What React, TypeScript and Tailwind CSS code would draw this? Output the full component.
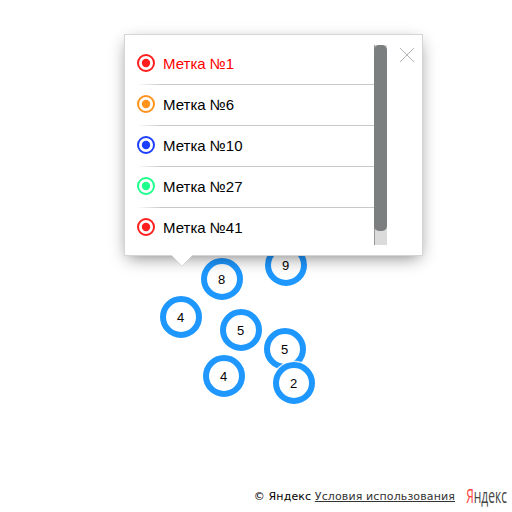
const items = [
  { label: 'Метка №1', color: '#ff1f1f', active: true },
  { label: 'Метка №6', color: '#ff931e', active: false },
  { label: 'Метка №10', color: '#1e3fff', active: false },
  { label: 'Метка №27', color: '#1eff8e', active: false },
  { label: 'Метка №41', color: '#ff1f1f', active: false },
];

const clusters = [
  { x: 265, y: 244, count: 9 },
  { x: 201, y: 258, count: 8 },
  { x: 160, y: 296, count: 4 },
  { x: 220, y: 309, count: 5 },
  { x: 264, y: 328, count: 5 },
  { x: 203, y: 355, count: 4 },
  { x: 273, y: 362, count: 2 },
];

function Cluster({ x, y, count }: { x: number; y: number; count: number }) {
  return (
    <div className="absolute size-[42px]" style={{ left: x, top: y }}>
      <svg className="absolute -left-0.5 -top-0.5" width="46" height="46" viewBox="-2 -2 46 46">
        <circle cx="21" cy="21" r="22.5" fill="#fff" fillOpacity="0.8" />
        <circle cx="21" cy="21" r="18" fill="#fff" stroke="#1e98ff" strokeWidth="6" />
      </svg>
      <span className="relative flex h-[43px] items-center justify-center pr-px text-[13px] text-black">{count}</span>
    </div>
  );
}

function PlacemarkIcon({ color }: { color: string }) {
  return (
    <svg width="18" height="18" viewBox="0 0 18 18" fill="none">
      <circle cx="9" cy="9" r="8" stroke={color} strokeWidth="2" />
      <circle cx="9" cy="9" r="4.2" fill={color} />
    </svg>
  );
}

function Balloon() {
  return (
    <div className="absolute left-[124px] top-[34px] h-[222px] w-[299px] border border-[#d5d5d5] bg-white pl-3 pt-2.5 shadow-[0_5px_15px_-5px_rgba(0,0,0,0.45),0_5px_18px_rgba(0,0,0,0.1)]">
      <div className="flex">
        <ul className="h-[200px] w-[237px] overflow-hidden">
          {items.map((item) => (
            <li key={item.label} className="h-[41px]">
              <div className="flex h-10 items-center gap-2 pb-1">
                <PlacemarkIcon color={item.color} />
                <span className={item.active ? 'pt-0.5 text-[15px] leading-4 text-[#f00]' : 'pt-0.5 text-[15px] leading-4 text-black'}>
                  {item.label}
                </span>
              </div>
              <div className="-mt-px h-px bg-[linear-gradient(to_right,#fff_0,#c8c8c8_24px)]" />
            </li>
          ))}
        </ul>
        <div className="h-[200px] w-[13px] border-l border-[#999] bg-[#dbdbdb]">
          <div className="-ml-px h-[186px] w-[13px] rounded-[5px] bg-[#7b7f7f]" />
        </div>
        <svg className="ml-[13px] mt-[3px]" width="14" height="14" viewBox="0 0 14 14" stroke="#b3b3b3" strokeWidth="1">
          <path d="M0 0L14 14M14 0L0 14" />
        </svg>
      </div>
      <svg className="absolute left-[46px] top-[220px]" width="22" height="12" viewBox="0 0 22 12">
        <path d="M0 0H22L11 11Z" fill="#fff" />
        <path d="M0 0L11 11L22 0" fill="none" stroke="#000" strokeOpacity="0.15" strokeWidth="0.7" />
      </svg>
    </div>
  );
}

export default function App() {
  return (
    <div className="relative flex h-[512px] w-[512px] flex-col justify-end overflow-hidden bg-white font-['Liberation_Sans',Arial,sans-serif]">
      {clusters.map((c) => (
        <Cluster key={`${c.x}-${c.y}`} {...c} />
      ))}
      <Balloon />
      <footer className="flex h-8 items-center justify-end pr-[5px] font-['DejaVu_Sans',sans-serif] text-[11px] text-black">
        <span className="whitespace-nowrap pt-0.5 tracking-[0.12px]">
          © Яндекс <a className="text-[#333] underline">Условия использования</a>
        </span>
        <div className="ml-[10px] flex w-[42px] justify-end">
          <span className="origin-right scale-x-[0.6] font-['Open_Sans',sans-serif] text-[20px] leading-8 font-medium text-[#444]">
            <span className="text-[#ff3b3b]">Я</span>ндекс
          </span>
        </div>
      </footer>
    </div>
  );
}
